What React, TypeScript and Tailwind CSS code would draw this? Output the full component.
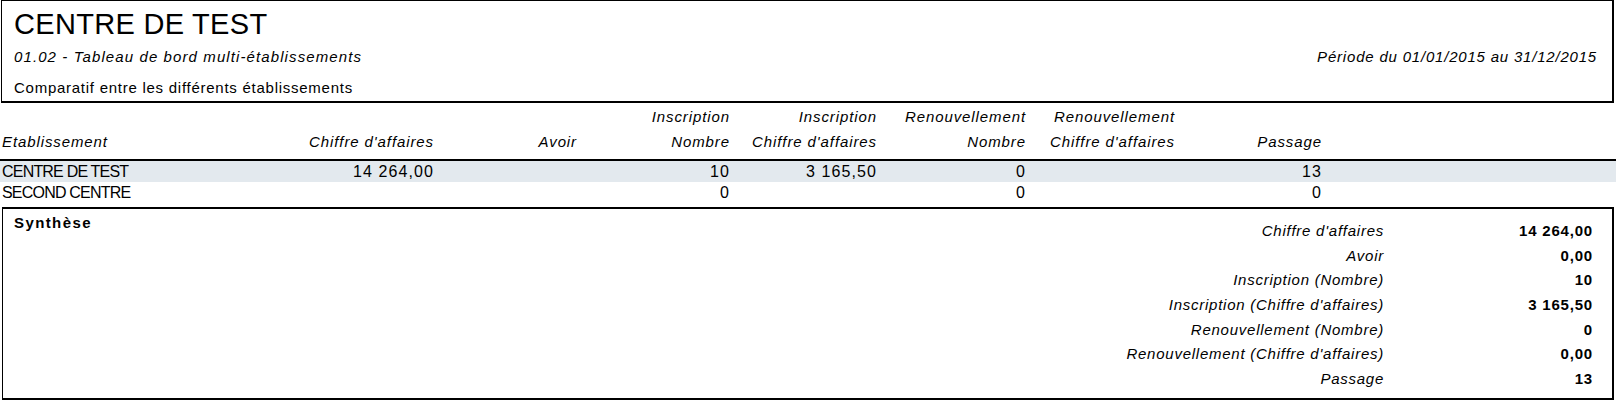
import React from "react";

type Row = {
  name: string;
  ca: string;
  avoir: string;
  insNb: string;
  insCa: string;
  renNb: string;
  renCa: string;
  passage: string;
};

const ROWS: Row[] = [
  { name: "CENTRE DE TEST", ca: "14 264,00", avoir: "", insNb: "10", insCa: "3 165,50", renNb: "0", renCa: "", passage: "13" },
  { name: "SECOND CENTRE", ca: "", avoir: "", insNb: "0", insCa: "", renNb: "0", renCa: "", passage: "0" },
];

const SYNTHESE: [string, string][] = [
  ["Chiffre d'affaires", "14 264,00"],
  ["Avoir", "0,00"],
  ["Inscription (Nombre)", "10"],
  ["Inscription (Chiffre d'affaires)", "3 165,50"],
  ["Renouvellement (Nombre)", "0"],
  ["Renouvellement (Chiffre d'affaires)", "0,00"],
  ["Passage", "13"],
];

const cols = "grid grid-cols-[200px_234px_143px_153px_147px_149px_149px_147px_1fr]";

export default function App() {
  return (
    <div className="w-[1616px] h-[401px] bg-white text-black font-['Liberation_Sans',Arial,sans-serif] text-[15px] overflow-hidden">
      {/* en-tete */}
      <div className="ml-px w-[1613px] h-[103px] border-t border-l border-r-2 border-b-2 border-black pl-[12px] pr-[15px]">
        <div className="pt-[9px] text-[29px] leading-[29px] tracking-[0.3px]">CENTRE DE TEST</div>
        <div className="mt-2 flex justify-between leading-[20px] italic">
          <span className="tracking-[1.1px]">01.02 - Tableau de bord multi-établissements</span>
          <span className="tracking-[0.8px]">Période du 01/01/2015 au 31/12/2015</span>
        </div>
        <div className="mt-[11px] leading-[20px] tracking-[0.74px]">
          Comparatif entre les différents établissements
        </div>
      </div>

      {/* tableau */}
      <div className={`${cols} pt-px pb-[5px] border-b-2 border-black italic tracking-[0.9px] leading-[25px]`}>
        <div className="row-start-2 pl-[2px]">Etablissement</div>
        <div className="row-start-2 text-right">Chiffre d'affaires</div>
        <div className="row-start-2 text-right">Avoir</div>
        <div className="text-right col-start-4 row-start-1">Inscription</div>
        <div className="text-right col-start-4 row-start-2">Nombre</div>
        <div className="text-right col-start-5 row-start-1">Inscription</div>
        <div className="text-right col-start-5 row-start-2">Chiffre d'affaires</div>
        <div className="text-right col-start-6 row-start-1">Renouvellement</div>
        <div className="text-right col-start-6 row-start-2">Nombre</div>
        <div className="text-right col-start-7 row-start-1">Renouvellement</div>
        <div className="text-right col-start-7 row-start-2">Chiffre d'affaires</div>
        <div className="text-right col-start-8 row-start-2">Passage</div>
      </div>
      {ROWS.map((r, i) => (
        <div
          key={r.name}
          className={`${cols} h-[21px] leading-[21px] text-[16px] tracking-[1.1px] ${i === 0 ? "bg-[#e3e9ee]" : ""}`}
        >
          <div className="pl-[2px] tracking-[-0.8px]">{r.name}</div>
          <div className="text-right">{r.ca}</div>
          <div className="text-right">{r.avoir}</div>
          <div className="text-right">{r.insNb}</div>
          <div className="text-right">{r.insCa}</div>
          <div className="text-right">{r.renNb}</div>
          <div className="text-right">{r.renCa}</div>
          <div className="text-right">{r.passage}</div>
          <div />
        </div>
      ))}

      {/* synthese */}
      <div className="mt-1 ml-[2px] w-[1612px] h-[193px] border-2 border-l border-black flex">
        <div className="flex-1 pl-[11px] pt-[4px] font-bold leading-[20px] tracking-[1.4px]">Synthèse</div>
        <div className="w-[600px] pt-[9px] pr-[19px] grid grid-cols-[1fr_209px] auto-rows-[24.7px] leading-[25px]">
          {SYNTHESE.map(([label, value]) => (
            <React.Fragment key={label}>
              <span className="italic text-right tracking-[0.75px]">{label}</span>
              <span className="text-right font-bold tracking-[0.8px]">{value}</span>
            </React.Fragment>
          ))}
        </div>
      </div>
    </div>
  );
}
